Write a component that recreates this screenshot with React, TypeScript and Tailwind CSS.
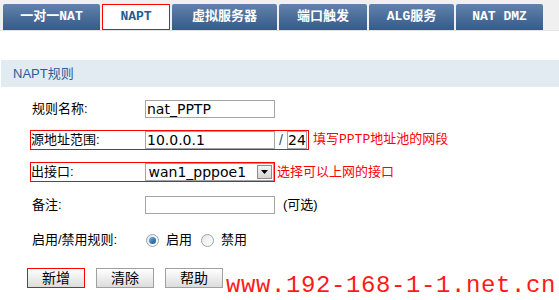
import React from "react";

const cjk = { fontFamily: '"Liberation Sans", "Noto Sans CJK SC", sans-serif' };
const tabFont = { fontFamily: '"Liberation Mono", "Noto Sans CJK SC", monospace' };

const tabs = [
  { label: "一对一NAT", w: "w-[97px]" },
  { label: "NAPT", w: "w-[68px]", active: true },
  { label: "虚拟服务器", w: "w-[105px]" },
  { label: "端口触发", w: "w-[88px]" },
  { label: "ALG服务", w: "w-[85px]" },
  { label: "NAT DMZ", w: "w-[87px]" },
];

function Radio({ checked }: { checked?: boolean }) {
  return (
    <span className="w-[13px] h-[13px] rounded-full border border-[#9aa4ad] bg-gradient-to-br from-[#e6e6e6] to-[#ffffff] flex items-center justify-center">
      {checked && <span className="w-[7px] h-[7px] rounded-full bg-gradient-to-br from-[#6fb5e8] to-[#0d4f8f]" />}
    </span>
  );
}

function Btn({ label, red }: { label: string; red?: boolean }) {
  return (
    <button
      className={`w-[58px] h-[20px] text-[14px] leading-none text-black bg-gradient-to-b from-[#ffffff] to-[#dcdcdc] ${
        red ? "border border-[#ff0000]" : "border border-[#a0a0a0]"
      }`}
      style={cjk}
    >
      {label}
    </button>
  );
}

export default function App() {
  return (
    <div className="w-[559px] h-[300px] bg-white overflow-hidden relative" style={cjk}>
      {/* Tabs */}
      <div className="h-[31px] bg-[#f0f0f0] border-b border-[#e4e4e4] flex items-end pl-[3px] gap-[2px]">
        {tabs.map((t) => (
          <div
            key={t.label}
            className={`${t.w} h-[26px] flex items-center justify-center text-[13px] font-bold ${
              t.active
                ? "bg-white border border-[#ff0000] text-[#1f5d99]"
                : "bg-gradient-to-b from-[#6182ad] to-[#365b86] text-white rounded-t-[2px]"
            }`}
            style={tabFont}
          >
            {t.label}
          </div>
        ))}
      </div>

      {/* Section header */}
      <div className="mt-[29px] ml-[1px] h-[27px] bg-[#e2eaf2] flex items-center pl-[12px] text-[13px] text-[#2a5e9a]">
        NAPT规则
      </div>

      {/* Form */}
      <div className="pl-[30px] text-[13px] text-black">
        <div className="mt-[12px] h-[20px] flex items-center border border-transparent w-[250px]">
          <span className="w-[114px] pl-[1px]">规则名称:</span>
          <div className="w-[130px] h-[18px] border border-[#a5a5a5] flex items-center pl-[1px] text-[14px]" style={{ fontFamily: '"DejaVu Sans", sans-serif' }}>
            nat_PPTP
          </div>
        </div>

        <div className="mt-[11px] flex items-center">
          <div className="h-[20px] w-[279px] flex items-center border border-[#ff0000]">
            <span className="w-[114px]">源地址范围:</span>
            <div className="w-[130px] h-[18px] border border-[#a5a5a5] flex items-center pl-[1px] text-[14px]" style={{ fontFamily: '"DejaVu Sans", sans-serif' }}>
              10.0.0.1
            </div>
            <span className="w-[12px] text-center text-[14px] text-[#2a4f7a]">/</span>
            <div className="w-[20px] h-[18px] border border-[#a5a5a5] flex items-center justify-center text-[14px]" style={{ fontFamily: '"DejaVu Sans", sans-serif' }}>
              24
            </div>
          </div>
          <span className="ml-[4px] text-[13px] text-[#ff0000]" style={tabFont}>填写PPTP地址池的网段</span>
        </div>

        <div className="mt-[12px] flex items-center">
          <div className="h-[20px] w-[245px] flex items-center border border-[#ff0000]">
            <span className="w-[114px]">出接口:</span>
            <div className="w-[130px] h-[18px] border border-[#a5a5a5] flex items-center justify-between pl-[3px] pr-[1px] text-[14px]" style={{ fontFamily: '"DejaVu Sans", sans-serif' }}>
              <span>wan1_pppoe1</span>
              <span className="w-[15px] h-[14px] bg-gradient-to-b from-[#f4f4f4] to-[#d4d4d4] border border-[#8c8c8c] flex items-center justify-center">
                <svg width="7" height="4" viewBox="0 0 7 4">
                  <path d="M0 0 H7 L3.5 4 Z" fill="#000" />
                </svg>
              </span>
            </div>
          </div>
          <span className="ml-[2px] text-[13px] text-[#ff0000]">选择可以上网的接口</span>
        </div>

        <div className="mt-[13px] h-[20px] flex items-center border border-transparent">
          <span className="w-[114px] pl-[1px]">备注:</span>
          <div className="w-[130px] h-[18px] border border-[#a5a5a5]" />
          <span className="ml-[8px]">(可选)</span>
        </div>

        <div className="mt-[15px] h-[20px] flex items-center border border-transparent">
          <span className="w-[115px] pl-[1px]">启用/禁用规则:</span>
          <Radio checked />
          <span className="ml-[7px]">启用</span>
          <span className="ml-[9px]"><Radio /></span>
          <span className="ml-[7px]">禁用</span>
        </div>

        <div className="mt-[18px] -ml-[3px] flex items-start">
          <Btn label="新增" red />
          <span className="ml-[11px]"><Btn label="清除" /></span>
          <span className="ml-[11px]"><Btn label="帮助" /></span>
          <span className="ml-[3px] mt-[6px] text-[24px] leading-none text-[#ff1a1a] tracking-[0.6px]" style={{ fontFamily: '"Liberation Mono", monospace' }}>
            www.192-168-1-1.net.cn
          </span>
        </div>
      </div>
    </div>
  );
}
